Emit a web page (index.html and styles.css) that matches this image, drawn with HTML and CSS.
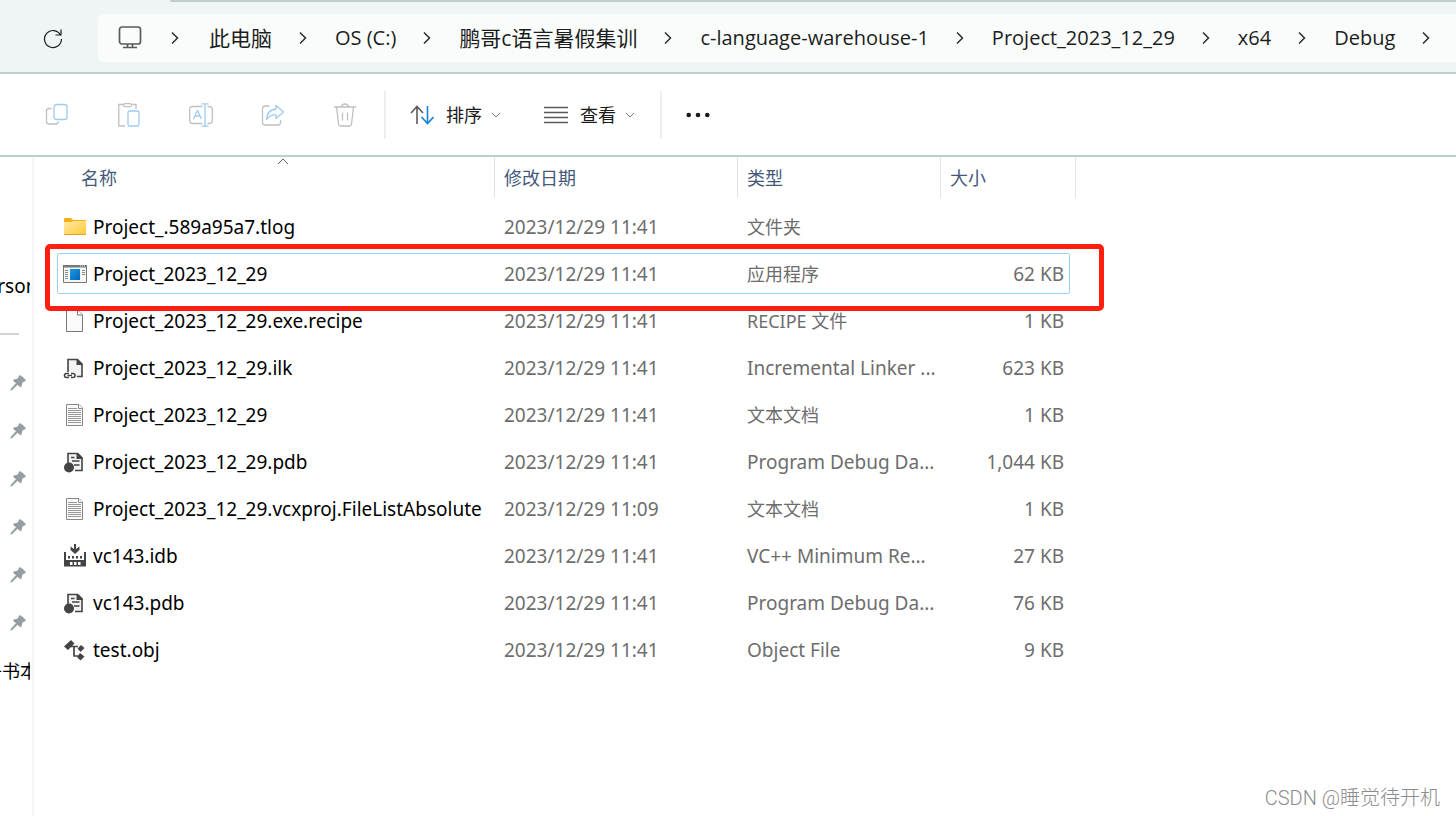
FILE: index.html
```html
<!DOCTYPE html>
<html lang="zh-CN">
<head>
<meta charset="utf-8">
<title>Debug</title>
<link rel="stylesheet" href="styles.css">
</head>
<body>
<svg class="defs" aria-hidden="true">
  <symbol id="chev" viewBox="0 0 10 14"><path d="M2 1.500 7.500 7 2 12.500" fill="none" stroke="#2b2d2d" stroke-width="1.500"/></symbol>
  <symbol id="down" viewBox="0 0 10 6"><path d="M1 1 5 5 9 1" fill="none" stroke="#777" stroke-width="1"/></symbol>
  <symbol id="pin" viewBox="0 0 16 16"><path d="M9.300.6Q10.200-.2 11.200.8L15.300 4.600Q16.200 5.600 15 6.200L12.400 7.600 11.500 11.300Q11 12.800 9.800 11.800L7.600 9.700 2.200 15 .3 15.700.8 13.700 6 8.200 3.700 6.200Q2.600 5 4 4.600L7.700 3.600Z" fill="#929ea4"/></symbol>
  <symbol id="folder" viewBox="0 0 24 24">
    <linearGradient id="fg" x1="0" y1="0" x2="1" y2="1"><stop offset="0" stop-color="#ffe9a2"/><stop offset="1" stop-color="#ffcb3d"/></linearGradient>
    <path d="M1 4q0-1 1-1h6l2 2h12q1 0 1 1v2H1z" fill="#f5b114"/><path d="M1 7h7l2-1h13v13H1z" fill="url(#fg)"/><path d="M1 19.500h22" stroke="#e3a520"/>
  </symbol>
  <symbol id="app" viewBox="0 0 24 24">
    <linearGradient id="ag" x1="0" y1="0" x2="1" y2="1"><stop offset="0" stop-color="#1b9be6"/><stop offset="1" stop-color="#0464b4"/></linearGradient>
    <path d="M.5 3.500h23v17H.5z" fill="#f6f6f6" stroke="#777"/><path d="M0 3h24v2.500H0z" fill="#777"/><path d="M17 4h1m1 0h1m1 0h1" stroke="#eee"/>
    <path d="M2 8.500h3m-3 2h3m-3 2h3m-3 2h3m-3 2h3M19 8.500h3m-3 2h3m-3 2h3" stroke="#8a8a8a"/><path d="M7 7h10v11H7z" fill="url(#ag)"/>
  </symbol>
  <symbol id="blank" viewBox="0 0 24 24"><path d="M3.500 1.500h11.500l4.500 4.500v16.500h-16z" fill="#fafafa" stroke="#777"/><path d="M14.500 1.500v4.500h5" fill="#fff" stroke="#777"/></symbol>
  <symbol id="text" viewBox="0 0 24 24"><path d="M3.500 1.500h12.500l3.500 3.500v17.500h-16z" fill="#fafafa" stroke="#888"/><path d="M15.500 1.500v4h4" fill="#fff" stroke="#888"/><path d="M5 5.500h9M5 7.500h13m-13 2h13m-13 2h13m-13 2h13m-13 2h13m-13 2h13m-13 2h13" stroke="#999"/></symbol>
  <symbol id="ilk" viewBox="0 0 24 24"><path d="M5 16V3.500h9l5 5V20.500h-5" fill="#f3f3f3" stroke="#444" stroke-width="1.600"/><path d="M13.500 3h1.500l4.500 4.500v1.500h-6z" fill="#444"/><path d="M1 16.500h12v6H1z" fill="#fff"/><path d="M6 17.500H3.500q-2 0-2 2t2 2H6M8 17.500h2q2 0 2 2t-2 2H8M4.500 19.500h4.500" fill="none" stroke="#444" stroke-width="1.600"/></symbol>
  <symbol id="pdb" viewBox="0 0 24 24"><path d="M5 13V3.500h9.500l4.500 4.500V20.500h-7" fill="#f3f3f3" stroke="#444" stroke-width="1.600"/><path d="M13.500 3H15l4.500 4.500V9h-6z" fill="#444"/><path d="M8 7.500h3.500M9 11h7.500M11 15h5.500" stroke="#444" stroke-width="1.600"/><circle cx="6" cy="17.500" r="5" fill="#444"/></symbol>
  <symbol id="idb" viewBox="0 0 24 24"><path d="M11 0h2v5l3.500-2.500V6L12 10 7.500 6V2.500L11 5z" fill="#444"/><path d="M1 8h2v8h18V8h2v14.500H1z" fill="#444"/><path d="M5 12h2v2.500H5zm4 0h2v2.500H9zm4 0h2v2.500h-2zm4 0h2v2.500h-2z" fill="#444"/><path d="M7 18h2.500v3H7zm4 0h2.500v3H11zm4 0h2.500v3H15z" fill="#fff"/></symbol>
  <symbol id="obj" viewBox="0 0 24 24"><path d="M8 2 11.500 5.500 5 12 1 8.500zM18 7l3.500 3-4 4-3-3.500zM17 15l4.500 3.500-4 4-3.500-3.500z" fill="#444"/><path d="M8 8.500h7M11 9v9h4" fill="none" stroke="#444" stroke-width="1.700"/></symbol>
</svg>

<header class="nav">
  <button class="plain" aria-label="刷新"><svg width="22" height="22" viewBox="0 0 22 22" fill="none" stroke="#1d1d1d" stroke-width="1.200"><path d="M18.500 8A8.500 8.500 0 1 0 19.500 12M19 2.500V8h-5.500"/></svg></button>
  <nav class="address" aria-label="地址">
    <svg class="pc" width="24" height="24" viewBox="0 0 24 24" fill="none" stroke="#585a5a" stroke-width="1.700"><rect x="1.500" y="1" width="21" height="17" rx="2.500"/><path d="M9.500 18v3.500m5-3.500v3.500M5 21.500h14"/></svg>
    <ol class="crumbs">
      <li><svg class="chev"><use href="#chev"/></svg><a href="#">此电脑</a></li>
      <li><svg class="chev"><use href="#chev"/></svg><a href="#">OS (C:)</a></li>
      <li><svg class="chev"><use href="#chev"/></svg><a href="#">鹏哥c语言暑假集训</a></li>
      <li><svg class="chev"><use href="#chev"/></svg><a href="#">c-language-warehouse-1</a></li>
      <li><svg class="chev"><use href="#chev"/></svg><a href="#">Project_2023_12_29</a></li>
      <li><svg class="chev"><use href="#chev"/></svg><a href="#">x64</a></li>
      <li><svg class="chev"><use href="#chev"/></svg><a href="#">Debug</a></li>
      <li><svg class="chev"><use href="#chev"/></svg></li>
    </ol>
  </nav>
</header>

<div class="toolbar" role="toolbar">
  <div class="group icons">
    <button class="plain" aria-label="复制"><svg class="tool" viewBox="0 0 24 24"><path d="M6.500 5.500H4Q1.500 5.500 1.500 8v10.500Q1.500 21 4 21h7Q13 21 13.500 18.500" stroke="#c0c0c0"/><rect x="9" y="1.500" width="13" height="15" rx="2.500" stroke="#9dcbf1"/></svg></button>
    <button class="plain" aria-label="粘贴"><svg class="tool" viewBox="0 0 24 24"><path d="M6.500 1.500H1.800V23H8M15.500 1.500H19V6" stroke="#c0c0c0"/><rect x="6.500" y=".6" width="8" height="3" rx="1.500" stroke="#c0c0c0"/><rect x="11" y="8" width="11" height="15" rx="1.500" stroke="#9dcbf1"/></svg></button>
    <button class="plain" aria-label="重命名"><svg class="tool" viewBox="0 0 24 24"><path d="M13.500 3.500H4Q.7 3.500.7 6.500v11Q.7 20.500 4 20.500h9.500M18.500 3.500h1.500Q23.300 3.500 23.300 6.500v11Q23.300 20.500 20 20.500h-1.500" stroke="#c0c0c0"/><path d="M4.500 16 8.500 7.500 12.500 16M6 13h5M16 1v22M12.500.8h7M12.500 23.200h7" stroke="#9dcbf1"/></svg></button>
    <button class="plain" aria-label="共享"><svg class="tool" viewBox="0 0 24 24"><path d="M8.500 3H4Q1.500 3 1.500 5.500v14Q1.500 22 4 22h13Q19.500 22 19.500 19.500V17" stroke="#c0c0c0"/><path d="M15 6V2.500L22.500 9 15 15.500V12Q9 11.500 5.500 16.500 6 7 15 6z" stroke="#9dcbf1" stroke-linejoin="round"/></svg></button>
    <button class="plain" aria-label="删除"><svg class="tool" viewBox="0 0 24 24" stroke="#c0c0c0"><path d="M1 4h22M3.500 4 5.500 21Q5.700 23 7.500 23h9Q18.300 23 18.500 21L20.500 4M8.500 4Q9 1 12 1t3.500 3M9.500 9.500v8M14.500 9.500v8"/></svg></button>
  </div>
  <div class="group menus">
    <button class="plain menu"><svg width="24" height="20" viewBox="0 0 24 20" fill="none" stroke-width="1.600"><path d="M7 19V1.500M1 8 7 1.500 13 8" stroke="#5a5a5a"/><path d="M17.500 1v17.500M11.500 12l6 6.500 6-6.500" stroke="#1583d8"/></svg><span>排序</span><svg class="down"><use href="#down"/></svg></button>
    <button class="plain menu"><svg width="24" height="18" viewBox="0 0 24 18" stroke="#5a5a5a" stroke-width="1.300"><path d="M0 1.500h24M0 6.500h24M0 11.500h24M0 16.500h24"/></svg><span>查看</span><svg class="down"><use href="#down"/></svg></button>
  </div>
  <button class="plain more" aria-label="更多"><svg width="24" height="6" viewBox="0 0 24 6" fill="#1a1a1a"><circle cx="2.700" cy="3" r="2.300"/><circle cx="12" cy="3" r="2.300"/><circle cx="21.300" cy="3" r="2.300"/></svg></button>
</div>

<main class="body">
  <aside class="side">
    <a class="person" href="#">Person</a>
    <hr>
    <ul class="pins">
      <li><svg><use href="#pin"/></svg></li><li><svg><use href="#pin"/></svg></li><li><svg><use href="#pin"/></svg></li><li><svg><use href="#pin"/></svg></li><li><svg><use href="#pin"/></svg></li><li><svg><use href="#pin"/></svg></li>
    </ul>
    <a class="books" href="#">子书本</a>
  </aside>
  <section class="pane">
    <table>
      <colgroup><col class="c-name"><col class="c-date"><col class="c-type"><col class="c-size"></colgroup>
      <thead><tr>
        <th class="first"><button class="plain head">名称<svg class="caret" viewBox="0 0 12 7"><path d="M1 6 6 1l5 5" fill="none" stroke="#666"/></svg></button></th>
        <th><button class="plain head">修改日期</button></th>
        <th><button class="plain head">类型</button></th>
        <th><button class="plain head">大小</button></th>
      </tr></thead>
      <tbody>
        <tr><td><span class="file"><svg><use href="#folder"/></svg>Project_.589a95a7.tlog</span></td><td>2023/12/29 11:41</td><td class="han">文件夹</td><td></td></tr>
        <tr class="selected"><td><span class="file"><svg><use href="#app"/></svg>Project_2023_12_29</span></td><td>2023/12/29 11:41</td><td class="han">应用程序</td><td>62 KB<span class="focus"></span><span class="mark"></span></td></tr>
        <tr><td><span class="file"><svg><use href="#blank"/></svg>Project_2023_12_29.exe.recipe</span></td><td>2023/12/29 11:41</td><td class="han">RECIPE 文件</td><td>1 KB</td></tr>
        <tr><td><span class="file"><svg><use href="#ilk"/></svg>Project_2023_12_29.ilk</span></td><td>2023/12/29 11:41</td><td>Incremental Linker ...</td><td>623 KB</td></tr>
        <tr><td><span class="file"><svg><use href="#text"/></svg>Project_2023_12_29</span></td><td>2023/12/29 11:41</td><td class="han">文本文档</td><td>1 KB</td></tr>
        <tr><td><span class="file"><svg><use href="#pdb"/></svg>Project_2023_12_29.pdb</span></td><td>2023/12/29 11:41</td><td>Program Debug Da...</td><td>1,044 KB</td></tr>
        <tr><td><span class="file"><svg><use href="#text"/></svg>Project_2023_12_29.vcxproj.FileListAbsolute</span></td><td>2023/12/29 11:09</td><td class="han">文本文档</td><td>1 KB</td></tr>
        <tr><td><span class="file"><svg><use href="#idb"/></svg>vc143.idb</span></td><td>2023/12/29 11:41</td><td>VC++ Minimum Re...</td><td>27 KB</td></tr>
        <tr><td><span class="file"><svg><use href="#pdb"/></svg>vc143.pdb</span></td><td>2023/12/29 11:41</td><td>Program Debug Da...</td><td>76 KB</td></tr>
        <tr><td><span class="file"><svg><use href="#obj"/></svg>test.obj</span></td><td>2023/12/29 11:41</td><td>Object File</td><td>9 KB</td></tr>
      </tbody>
    </table>
  </section>
</main>
<div class="watermark">CSDN @睡觉待开机</div>
</body>
</html>
```
FILE: styles.css
```css
* { box-sizing: border-box; }
body {
  margin: 0;
  min-height: 100vh;
  display: flex;
  flex-direction: column;
  background: #fff;
  color: #000;
  font: 19px/24px "Noto Sans", "Noto Sans CJK SC", sans-serif;
  overflow: hidden;
}
a { color: inherit; text-decoration: none; }
ol, ul { list-style: none; margin: 0; padding: 0; }
.defs { position: absolute; width: 0; height: 0; }
.plain { border: 0; padding: 0; background: none; color: inherit; font: inherit; display: flex; align-items: center; }

.nav {
  position: relative;
  display: flex;
  align-items: center;
  height: 74px;
  padding: 4px 0 0 42px;
  background: #eef5f4;
  border-bottom: 2px solid #bccfcb;
}
.nav::before {
  content: "";
  position: absolute;
  top: 0;
  left: 170px;
  right: 0;
  height: 2px;
  background: #bccfcb;
  border-bottom-left-radius: 2px;
}
.address {
  flex: 1;
  display: flex;
  align-items: center;
  height: 48px;
  margin-left: 34px;
  padding-left: 20px;
  background: #fafcfb;
  border-radius: 6px 0 0 6px;
  overflow: hidden;
}
.pc { flex: none; }
.crumbs { display: flex; font: 20px/28px "Open Sans", "Noto Sans CJK SC", sans-serif; color: #1c1e1e; white-space: nowrap; }
.crumbs li { display: flex; align-items: center; }
.crumbs li:nth-child(1), .crumbs li:nth-child(3) { font-size: 21px; }
.chev { width: 10px; height: 14px; margin: 0 27px 0 26px; }
.crumbs li:first-child .chev { margin: 0 29px 0 28px; }

.toolbar {
  display: flex;
  align-items: center;
  height: 83px;
  padding-left: 45px;
  border-bottom: 2px solid #bccfcb;
}
.group { display: flex; align-items: center; height: 48px; border-right: 2px solid #eee; }
.icons { gap: 48px; padding-right: 27px; }
.menus { gap: 43px; padding: 0 25px 0 24px; }
.tool { width: 24px; height: 24px; fill: none; stroke-width: 1.300; }
.menu { gap: 12px; font-size: 18px; color: #1a1a1a; }
.down { width: 10px; height: 6px; margin-left: -3px; }
.more { padding-left: 24px; }

.body { flex: 1; display: flex; }
.side {
  flex: none;
  width: 34px;
  padding: 117px 2px 0 0;
  border-right: 2px solid #f5f5f5;
  overflow: hidden;
}
.side a { display: block; width: 30px; overflow: hidden; white-space: nowrap; }
.person { text-indent: -25px; }
.side hr { width: 19px; height: 2px; margin: 35px 0 24px; border: 0; background: #d2d2d2; }
.pins li { display: flex; align-items: center; height: 48px; padding-left: 10px; }
.pins svg { width: 16px; height: 16px; }
.side .books { margin-top: 12px; font-size: 18px; text-indent: -16px; }

.pane { flex: 1; min-width: 0; }
table { width: 1042px; table-layout: fixed; border-collapse: separate; border-spacing: 0; }
.c-name { width: 461px; }
.c-date { width: 243px; }
.c-type { width: 203px; }
.c-size { width: 135px; }
th { height: 46px; padding: 0; vertical-align: top; font-weight: 400; }
.head {
  position: relative;
  width: 100%;
  height: 41px;
  padding-left: 9px;
  border-right: 1px solid #e3e3e3;
  font-size: 18px;
  color: #44597a;
}
.first { padding-left: 38px; }
.caret { position: absolute; top: 1px; left: 50%; width: 12px; height: 7px; margin-left: -6px; }
td { height: 47px; padding: 0 0 0 9px; color: #6d6d6d; white-space: nowrap; }
td:first-child { padding-left: 29px; color: #000; }
td:last-child { padding-right: 12px; text-align: right; }
.han { font-size: 18px; }
.file { display: flex; align-items: center; gap: 6px; }
.file svg { flex: none; width: 24px; height: 24px; }
.selected { position: relative; }
.focus {
  position: absolute;
  top: 3px;
  bottom: 3px;
  left: 23px;
  right: 6px;
  border: 1px solid #99d1ff;
  border-radius: 2px;
}
.mark {
  position: absolute;
  top: -6px;
  bottom: -14px;
  left: 11px;
  right: -28px;
  border: 5px solid #ff1e10;
  border-radius: 5px;
}
.watermark {
  position: absolute;
  right: 16px;
  bottom: 6px;
  font: 300 20px/24px Roboto, "Noto Sans CJK SC", sans-serif;
  color: #8c8c8c;
}
```
